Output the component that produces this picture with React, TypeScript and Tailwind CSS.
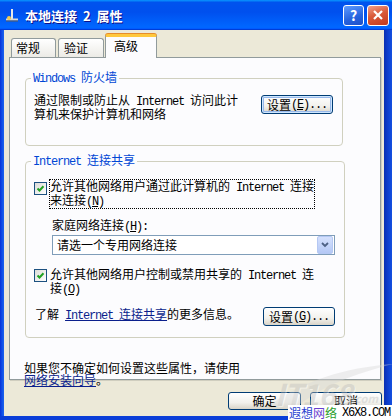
import type { ReactNode } from "react";

function M({ children }: { children: ReactNode }) {
  return <span className="font-['Liberation_Mono',monospace] tracking-[-1.2px]">{children}</span>;
}

function Check() {
  return (
    <span className="flex h-[13px] w-[13px] shrink-0 items-center justify-center border border-[#1C5180] bg-[linear-gradient(135deg,#DCDCD7,#FFFFFF)]">
      <svg viewBox="0 0 11 11" className="h-[11px] w-[11px]">
        <path d="M2.5 5.5 L4.5 7.5 L8.5 3.2" fill="none" stroke="#21A121" strokeWidth="2" />
      </svg>
    </span>
  );
}

function XpButton({ children, focused = false, className = "" }: { children: ReactNode; focused?: boolean; className?: string }) {
  return (
    <div
      className={`flex items-center justify-center rounded-[3px] border border-[#003C74] bg-[linear-gradient(180deg,#FFFFFF_0%,#F2F1EC_60%,#D9D4C8_100%)] leading-none ${
        focused ? "shadow-[inset_0_0_0_1px_#CEE7FF,inset_0_0_0_2px_#98B8EA]" : ""
      } ${className}`}
    >
      {children}
    </div>
  );
}

function TitleBar() {
  return (
    <div className="flex h-[30px] items-center bg-[linear-gradient(to_bottom,#0997FF_0%,#0053EE_8%,#0050EE_40%,#0066FF_88%,#0066FF_93%,#005BFF_95%,#003DD7_96%,#003DD7_100%)] pl-[5px] pr-[3px]">
      <svg viewBox="0 0 14 14" className="h-[14px] w-[14px]">
        <path d="M7 1 V11" stroke="#E8E8E8" strokeWidth="2" />
        <path d="M1 11.5 H13" stroke="#D8D8D8" strokeWidth="2" />
        <path d="M1 13 H13" stroke="#5A5A5A" strokeWidth="1" />
        <circle cx="4" cy="10" r="2" fill="#F2C94C" />
      </svg>
      <span className="ml-[6px] text-[13px] font-bold leading-none text-white [text-shadow:1px_1px_#0F1089]">
        本地连接 <span className="mx-[3px]">2</span> 属性
      </span>
      <div className="ml-auto flex gap-[3px]">
        <div className="flex h-[21px] w-[21px] items-center justify-center rounded-[3px] border border-white bg-[linear-gradient(160deg,#5E9BFF,#2663DE_60%,#1E4FC8)] text-[14px] font-bold leading-none text-white">
          ?
        </div>
        <div className="flex h-[21px] w-[22px] items-center justify-center rounded-[3px] border border-white bg-[linear-gradient(160deg,#F0A08A,#D95A3A_45%,#C4391D)]">
          <svg viewBox="0 0 12 12" className="h-[12px] w-[12px]">
            <path d="M2 2 L10 10 M10 2 L2 10" stroke="white" strokeWidth="2.2" />
          </svg>
        </div>
      </div>
    </div>
  );
}

export default function App() {
  return (
    <div className="relative h-[420px] w-[392px] overflow-hidden bg-[#0A3ED8] font-['Noto_Sans_CJK_SC',sans-serif] text-[12px] text-black">
      <TitleBar />
      <div className="flex h-[386px]">
        <div className="w-[4px] bg-[linear-gradient(to_right,#0831D9,#0F4FE6,#1D63EE)]" />
        <div className="flex w-[380px] flex-col bg-[#ECE9D8]">
          {/* tabs */}
          <div className="relative z-10 flex h-[27px] items-end pl-[7px] leading-[12px]">
            <div className="h-[19px] w-[45px] rounded-t-[3px] border border-b-0 border-[#919B9C] bg-[linear-gradient(180deg,#FFFFFF,#ECEBE6)] pl-[4px] pt-[3px]">
              常规
            </div>
            <div className="ml-[2px] h-[19px] w-[46px] rounded-t-[3px] border border-b-0 border-[#919B9C] bg-[linear-gradient(180deg,#FFFFFF,#ECEBE6)] pl-[5px] pt-[3px]">
              验证
            </div>
            <div className="-mb-px ml-px h-[24px] w-[52px] rounded-t-[3px] border-x border-t-[3px] border-x-[#919B9C] border-t-[#FFC83C] bg-[#FCFCFE] pl-[8px] pt-[3px] shadow-[0_-1px_0_#E68B2C]">
              高级
            </div>
          </div>

          {/* panel */}
          <div className="ml-[5px] flex h-[323px] w-[372px] flex-col border border-[#919B9C] bg-[#FCFCFE] leading-[12px] shadow-[1px_1px_0_#D0CEBF]">
            <fieldset className="ml-[15px] mt-[12px] w-[318px] rounded-[4px] border border-[#D0D0BF] pb-[25px] pl-[8px] pr-[9px]">
              <legend className="-ml-[3px] px-[2px] leading-[14px] text-[#0046D5]">
                <M>Windows </M>防火墙
              </legend>
              <div className="flex items-start justify-between pt-[8px]">
                <p>
                  通过限制或防止从<M> Internet </M>访问此计
                  <br />
                  算机来保护计算机和网络
                </p>
                <XpButton focused className="mt-px h-[19px] w-[72px]">
                  设置<M>(<u>E</u>)...</M>
                </XpButton>
              </div>
            </fieldset>

            <fieldset className="ml-[15px] mt-[7px] w-[318px] rounded-[4px] border border-[#D0D0BF] pb-[11px] pl-[8px] pr-[9px]">
              <legend className="-ml-[3px] px-[2px] leading-[14px] text-[#0046D5]">
                <M>Internet </M>连接共享
              </legend>
              <div className="mt-[10px] flex items-start">
                <div className="mt-[3px]">
                  <Check />
                </div>
                <p className="ml-[2px] border border-dotted border-black">
                  允许其他网络用户通过此计算机的<M> Internet </M>连接
                  <br />
                  来连接<M>(<u>N</u>)</M>
                </p>
              </div>
              <p className="ml-[18px] mt-[10px]">
                家庭网络连接<M>(<u>H</u>):</M>
              </p>
              <div className="ml-[18px] mt-[2px] flex h-[20px] w-[283px] items-center border border-[#7F9DB9] bg-white pl-[4px] pr-px">
                <span>请选一个专用网络连接</span>
                <span className="ml-auto flex h-[18px] w-[16px] items-center justify-center rounded-[2px] border border-[#B5C8F3] bg-[linear-gradient(180deg,#D5E1FD,#B4C8F5)]">
                  <svg viewBox="0 0 8 6" className="h-[6px] w-[8px]">
                    <path d="M1 1 L4 4 L7 1" fill="none" stroke="#4D6185" strokeWidth="1.8" />
                  </svg>
                </span>
              </div>
              <div className="mt-[13px] flex items-start">
                <div className="mt-px">
                  <Check />
                </div>
                <p className="ml-[3px]">
                  允许其他网络用户控制或禁用共享的<M> Internet </M>连
                  <br />
                  接<M>(<u>O</u>)</M>
                </p>
              </div>
              <div className="mt-[11px] flex items-start justify-between">
                <p className="ml-px mt-[1px]">
                  了解<M> </M>
                  <span className="text-[#0B1F8C] underline">
                    <M>Internet </M>连接共享
                  </span>
                  的更多信息。
                </p>
                <XpButton className="h-[19px] w-[72px]">
                  设置<M>(<u>G</u>)...</M>
                </XpButton>
              </div>
            </fieldset>

            <p className="ml-[14px] mt-[24px]">
              如果您不确定如何设置这些属性，请使用
              <br />
              <span className="text-[#0B1F8C] underline">网络安装向导</span>。
            </p>
          </div>

          {/* dialog buttons */}
          <div className="flex h-[36px] items-start justify-end gap-[9px] pr-[2px] pt-[12px]">
            <XpButton className="h-[18px] w-[73px]">确定</XpButton>
            <XpButton className="h-[18px] w-[72px]">取消</XpButton>
          </div>
        </div>
        <div className="w-[8px] bg-[linear-gradient(to_right,#0A2FB0,#0C3CCB_40%,#1450E0)]" />
      </div>
      <div className="h-[4px] bg-[#0A3ED8]" />

      {/* site watermark */}
      <div className="pointer-events-none absolute bottom-[12px] right-[14px] flex items-end opacity-40">
        <svg viewBox="0 0 130 50" className="absolute -top-[18px] left-[-10px] h-[50px] w-[130px]">
          <path d="M5 45 C40 20 80 8 128 4 C90 14 60 24 30 48 Z" fill="#D8D8D8" />
        </svg>
        <span className="relative text-[30px] font-bold italic leading-none tracking-[-1px] text-[#BDBDBD] [text-shadow:1px_1px_#FFFFFF]">
          IT168
        </span>
        <span className="relative mb-[2px] text-[11px] font-bold italic text-[#BDBDBD]">.com</span>
      </div>
      <div className="absolute bottom-0 right-0 flex h-[15px] w-[104px] items-center gap-[5px] bg-white pl-[1px] text-[12px] leading-none">
        <span>
          <span className="text-[#2B3FD0]">遐想</span>
          <span className="text-[#6A3FCF]">网</span>
          <span className="text-[#2BA02B]">络</span>
        </span>
        <span className="font-['Liberation_Mono',monospace] tracking-[-1.2px] text-black">X6X8.COM</span>
      </div>
    </div>
  );
}
